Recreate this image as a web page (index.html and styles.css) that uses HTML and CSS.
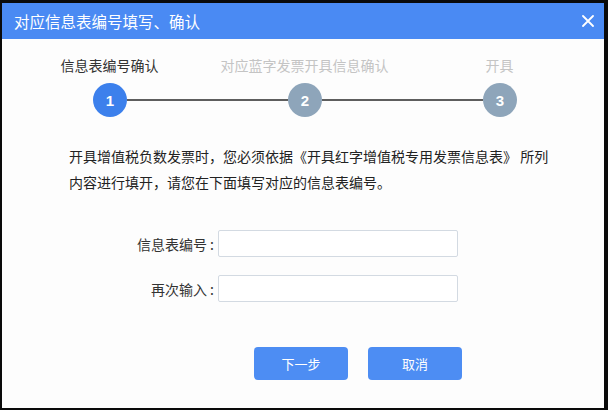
FILE: index.html
```html
<!DOCTYPE html>
<html lang="zh-CN">
<head>
<meta charset="utf-8">
<title>对应信息表编号填写、确认</title>
<link rel="stylesheet" href="styles.css">
</head>
<body>
<div class="dialog">
  <div class="titlebar">
    <span class="title">对应信息表编号填写、确认</span>
    <svg class="close" width="12" height="12" viewBox="0 0 12 12"><path d="M1 1L11 11M11 1L1 11" stroke="#fff" stroke-width="1.8" stroke-linecap="round"/></svg>
  </div>
  <div class="content">
    <div class="step-labels">
      <span class="step-label active">信息表编号确认</span>
      <span class="step-label">对应蓝字发票开具信息确认</span>
      <span class="step-label">开具</span>
    </div>
    <div class="step-track">
      <span class="dot active">1</span>
      <span class="line"></span>
      <span class="dot">2</span>
      <span class="line"></span>
      <span class="dot">3</span>
    </div>
    <p class="notice">开具增值税负数发票时，您必须依据《开具红字增值税专用发票信息表》 所列内容进行填开，请您在下面填写对应的信息表编号。</p>
    <div class="form">
      <label class="label">信息表编号 :</label>
      <input class="field" type="text">
      <label class="label">再次输入 :</label>
      <input class="field" type="text">
    </div>
    <div class="actions">
      <button class="btn">下一步</button>
      <button class="btn">取消</button>
    </div>
  </div>
</div>
</body>
</html>
```
FILE: styles.css
```css
* { box-sizing: border-box; }
html, body { margin: 0; height: 100%; }
body {
  background: #0a0a0a;
  padding: 3px 4px 2px 2px;
  font-family: "Noto Sans CJK SC", "Noto Sans", sans-serif;
  color: #333;
}
.dialog {
  height: 100%;
  background: #fdfdfd;
  display: flex;
  flex-direction: column;
}
.titlebar {
  height: 36px;
  background: #4a8af3;
  display: flex;
  align-items: center;
  justify-content: space-between;
  padding: 0 10px 0 12px;
}
.title {
  color: #fff;
  font-size: 15.5px;
  line-height: 20px;
}
.close { display: block; }
.content { flex: 1; }
.step-labels {
  display: grid;
  grid-template-columns: repeat(3, 195px);
  margin: 16px 0 0 10px;
}
.step-label {
  text-align: center;
  font-size: 14px;
  line-height: 20px;
  color: #c4c4c4;
}
.step-label.active { color: #333; }
.step-track {
  display: flex;
  align-items: center;
  margin: 8px 0 0 91px;
  width: 424px;
}
.dot {
  width: 34px;
  height: 34px;
  border-radius: 50%;
  background: #8ea5ba;
  color: #fff;
  font-weight: bold;
  font-size: 15px;
  display: flex;
  align-items: center;
  justify-content: center;
  font-family: "Liberation Sans", sans-serif;
}
.dot.active { background: #3c80ec; }
.line {
  flex: 1;
  height: 2px;
  background: #5e5e5e;
}
.notice {
  margin: 26px 0 0 67px;
  width: 484px;
  font-size: 14px;
  line-height: 26px;
  color: #222;
}
.form {
  display: grid;
  grid-template-columns: 216px 240px;
  row-gap: 18px;
  margin-top: 35px;
  align-items: center;
}
.label {
  text-align: right;
  padding-right: 4px;
  font-size: 14px;
  color: #333;
}
.field {
  height: 27px;
  border: 1px solid #d3dae2;
  border-radius: 2px;
  background: #fff;
  margin: 0;
}
.actions {
  display: flex;
  gap: 20px;
  margin: 45px 0 0 252px;
}
.btn {
  width: 94px;
  height: 33px;
  border: none;
  border-radius: 4px;
  background: #4d8df3;
  color: #fff;
  font-family: "Noto Sans CJK SC", sans-serif;
  font-size: 13px;
  padding: 0;
}
```
